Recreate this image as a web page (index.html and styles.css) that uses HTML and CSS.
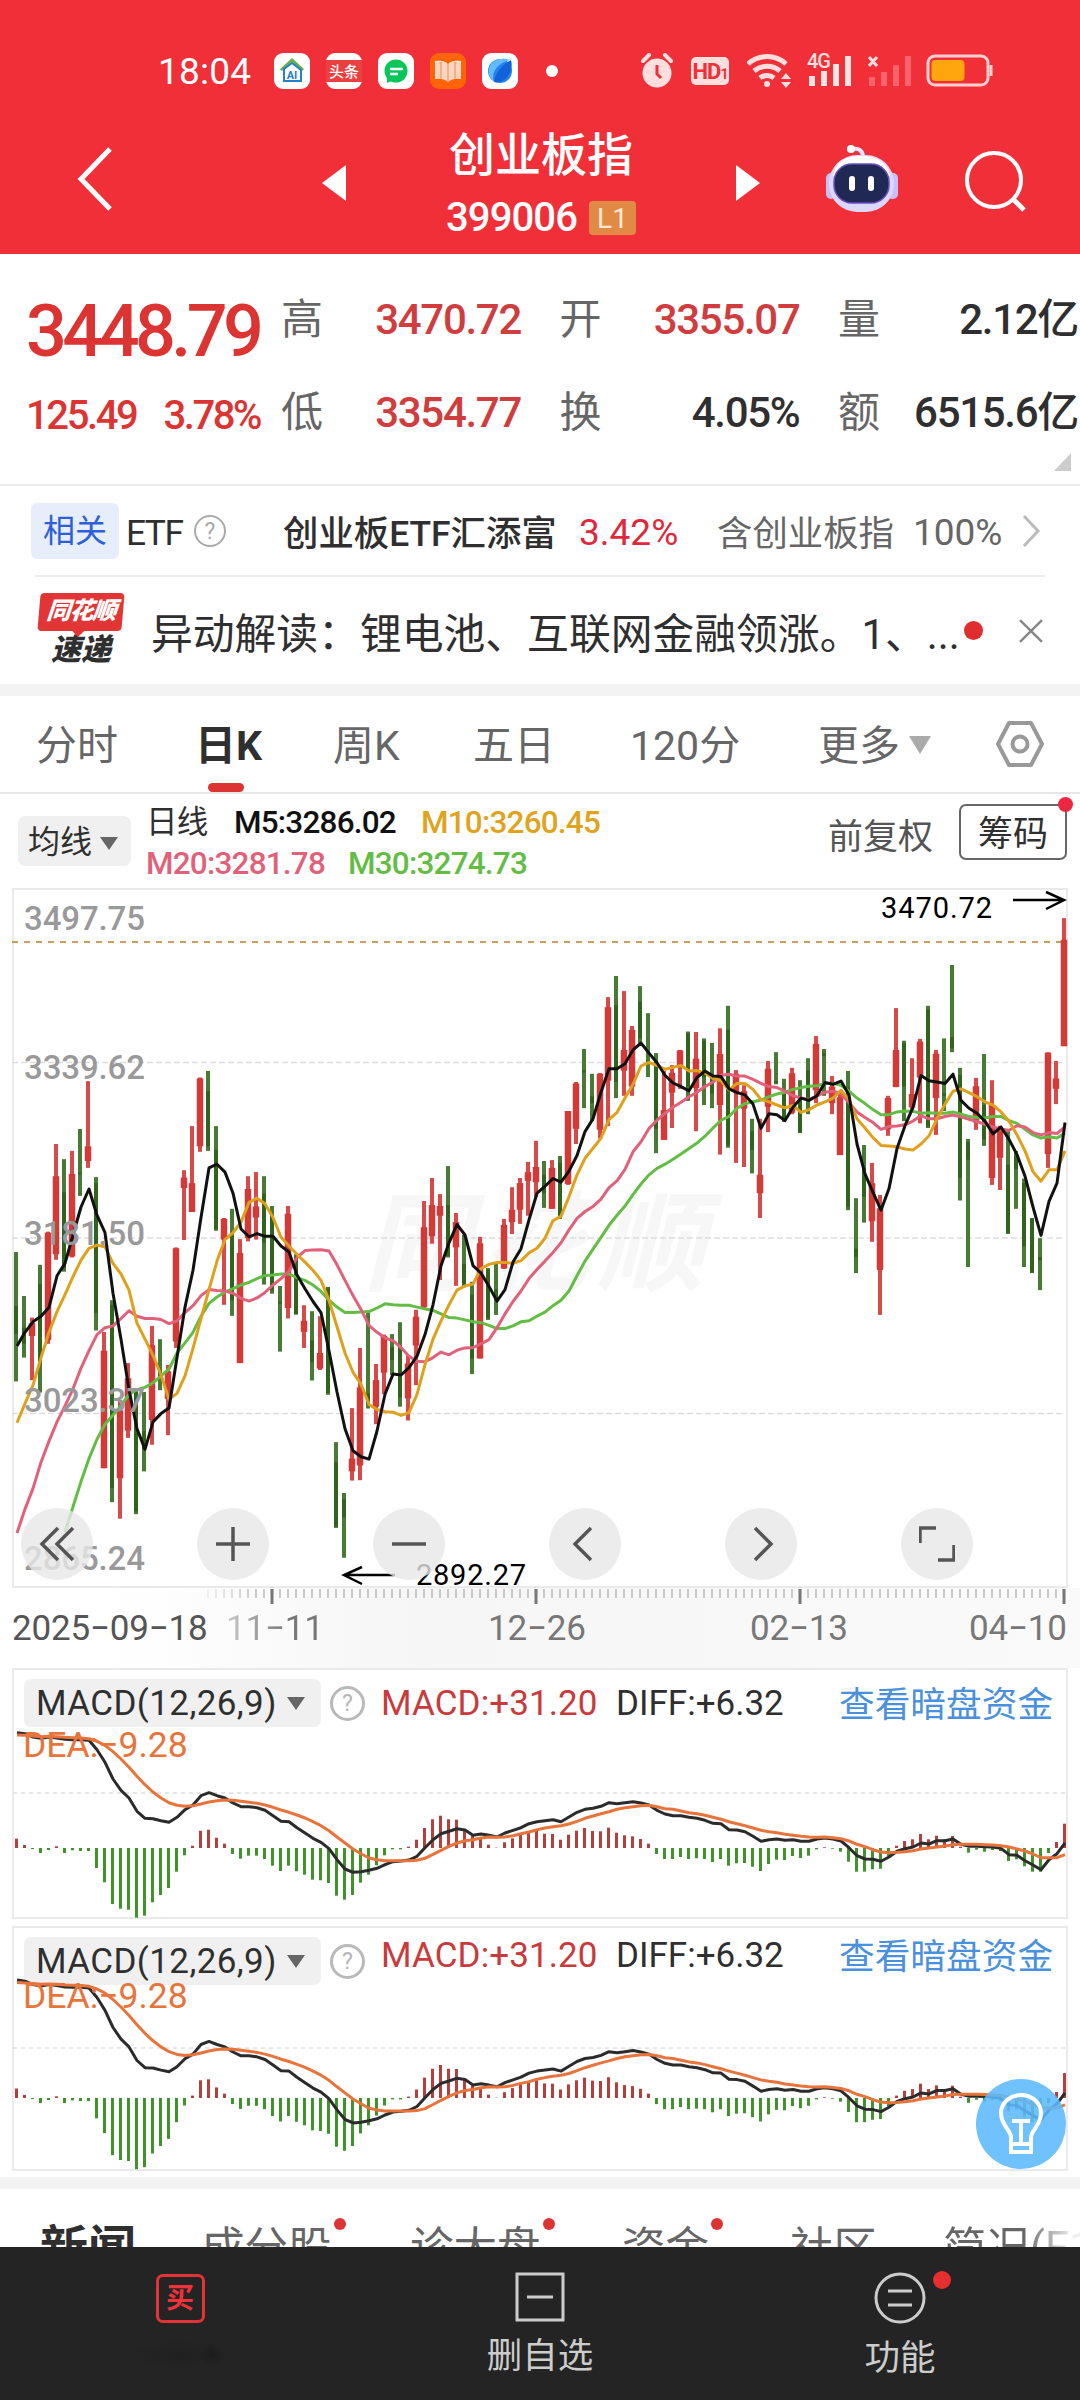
FILE: index.html
```html
<!DOCTYPE html>
<html lang="zh-CN">
<head>
    <meta charset="UTF-8">
    <meta name="viewport" content="width=device-width, initial-scale=1.0">
    <title>创业板指 399006</title>
    <link rel="stylesheet" href="styles.css">
</head>
<body>
    <header class="header">
        <div class="status-bar">
            <span class="time">18:04</span>
            <div class="apps">
                <svg class="app" viewBox="0 0 36 36"><rect width="36" height="36" rx="9" fill="#fff"/><path d="M7 17 18 7l11 10" fill="none" stroke="#6ab04a" stroke-width="3"/><path d="M10 16v12h17V17l-9-7z" fill="none" stroke="#2580c8" stroke-width="2"/><text x="18" y="26" class="app-ai">AI</text></svg>
                <svg class="app" viewBox="0 0 36 36"><rect width="36" height="36" rx="9" fill="#fff"/><rect y="7" width="36" height="22" fill="#ea4040"/><text x="18" y="24" class="app-toutiao">头条</text></svg>
                <svg class="app" viewBox="0 0 36 36"><rect width="36" height="36" rx="9" fill="#fff"/><circle cx="18" cy="18" r="11.5" fill="#08c65a"/><path d="M9 24v6l7-3z" fill="#08c65a"/><path d="M12 16h13M12 21h8" stroke="#fff" stroke-width="2.4"/></svg>
                <svg class="app" viewBox="0 0 36 36"><rect width="36" height="36" rx="9" fill="#ff6508"/><path d="M5 8q8-2 13 3 5-5 13-3v18q-8-1-13 3-5-4-13-3z" fill="#ffd6bd"/><path d="M18 11v18M11 9v17M25 9v17" stroke="#f2a47d" stroke-width="1.5"/></svg>
                <svg class="app" viewBox="0 0 36 36"><rect width="36" height="36" rx="9" fill="#fff"/><circle cx="18" cy="18" r="12" fill="#2384f0"/><path d="M29 7C19 8 8 17 12 29 6 24 4 15 11 9c6-5 14-3 18-2z" fill="#63baff"/><path d="M12 29C13 20 20 12 29 7c3 10-4 24-17 22z" fill="#1263d8"/></svg>
                <i class="more-dot"></i>
            </div>
            <div class="signals">
                <svg width="32" height="36" viewBox="0 0 32 36"><circle cx="16" cy="20" r="14.5" fill="#ffdede"/><path d="M2 8 8 2M30 8 24 2" stroke="#ffdede" stroke-width="4" stroke-linecap="round"/><path d="M16 12v9l4 4" fill="none" stroke="#f12f38" stroke-width="3"/></svg>
                <span class="hd">HD<small>1</small></span>
                <svg width="46" height="36" viewBox="0 0 46 36" fill="none" stroke="#ffdede" stroke-width="5"><path d="M1 11a28 28 0 0 1 38 0M7 18a20 20 0 0 1 26 0M13 25a11 11 0 0 1 14 0"/><circle cx="20" cy="31" r="3" fill="#ffdede" stroke="none"/><path d="M39 20l5 6H34zM39 35l5-6H34z" fill="#ffdede" stroke="none"/></svg>
                <svg width="47" height="36" viewBox="0 0 47 36"><text x="0" y="15" class="net">4G</text><path d="M5 33V23M17 33V18M29 33V11M41 33V3" stroke="#ffe3e3" stroke-width="6"/></svg>
                <svg width="44" height="36" viewBox="0 0 44 36"><path d="M1 4l8 9M9 4 1 13" stroke="#ffdede" stroke-width="3"/><path d="M4 33V24M16 33V19M28 33V12M40 33V3" stroke="#f9636b" stroke-width="6"/></svg>
                <svg width="67" height="34" viewBox="0 0 67 34"><rect x="2" y="2" width="60" height="29" rx="7" fill="none" stroke="#ffd0d0" stroke-width="3"/><rect x="5.5" y="6" width="33" height="21" rx="4" fill="#ffa50d"/><path d="M65 11v11" stroke="#ffd0d0" stroke-width="3"/></svg>
            </div>
        </div>
        <div class="title-bar">
            <svg class="back" width="36" height="64" viewBox="0 0 36 64"><path d="M33 2 4 32l29 30" fill="none" stroke="#fff" stroke-width="5"/></svg>
            <svg class="prev" width="24" height="36" viewBox="0 0 24 36"><path d="M24 0v36L0 18z" fill="#fff"/></svg>
            <div class="stock">
                <h1>创业板指</h1>
                <div class="code">399006 <span class="level">L1</span></div>
            </div>
            <svg class="next" width="24" height="36" viewBox="0 0 24 36"><path d="M0 0v36l24-18z" fill="#fff"/></svg>
            <svg class="robot" width="74" height="68" viewBox="0 0 74 68">
                <path d="M38 12c0-6-4-9-10-8" fill="none" stroke="#e9e4ff" stroke-width="4"/><circle cx="26" cy="4" r="4" fill="#fff"/>
                <rect x="1" y="28" width="10" height="26" rx="5" fill="#c8c0fa"/><rect x="62" y="28" width="11" height="26" rx="5" fill="#c8c0fa"/>
                <rect x="4" y="10" width="65" height="57" rx="28" fill="#dcd8fc"/><path d="M8 31c3-15 14-20 28-20s26 5 29 20z" fill="#fff"/>
                <rect x="9" y="19" width="55" height="39" rx="18" fill="#202954" stroke="#6a4cc0" stroke-width="1.5"/>
                <path d="M27 34v9M46 34v9" stroke="#fff" stroke-width="6" stroke-linecap="round"/>
            </svg>
            <svg class="search" width="62" height="62" viewBox="0 0 62 62" fill="none" stroke="#fff" stroke-width="4"><circle cx="29" cy="30" r="27"/><path d="M48 49l11 11" stroke-width="5"/></svg>
        </div>
    </header>

    <section class="quote">
        <div class="price">
            <div class="last">3448.79</div>
            <div class="change"><span>125.49</span><span>3.78%</span></div>
        </div>
        <div class="stat-col">
            <div class="stat"><label>高</label><b class="up">3470.72</b></div>
            <div class="stat"><label>低</label><b class="up">3354.77</b></div>
        </div>
        <div class="stat-col">
            <div class="stat"><label>开</label><b class="up">3355.07</b></div>
            <div class="stat"><label>换</label><b>4.05%</b></div>
        </div>
        <div class="stat-col">
            <div class="stat"><label>量</label><b>2.12亿</b></div>
            <div class="stat"><label>额</label><b>6515.6亿</b></div>
        </div>
        <i class="expand"></i>
    </section>

    <section class="related">
        <span class="tag">相关</span>
        <span class="etf">ETF</span>
        <span class="help">?</span>
        <span class="fund">创业板ETF汇添富</span>
        <span class="fund-up">3.42%</span>
        <span class="contain">含创业板指</span><span class="percent">100%</span>
        <svg width="19" height="34" viewBox="0 0 19 34"><path d="M2 2l14 15L2 32" fill="none" stroke="#bbb" stroke-width="3"/></svg>
    </section>

    <section class="news">
        <div class="news-logo"><span class="logo-top">同花顺</span><span class="logo-bottom">速递</span></div>
        <p>异动解读：锂电池、互联网金融领涨。1、...</p>
        <i class="news-dot"></i>
        <svg width="24" height="24" viewBox="0 0 24 24"><path d="M1 1l22 22M23 1 1 23" stroke="#888" stroke-width="2.5"/></svg>
    </section>

    <nav class="periods">
        <a class="p1">分时</a>
        <a class="p2 active">日K</a>
        <a class="p3">周K</a>
        <a class="p4">五日</a>
        <a class="p5">120分</a>
        <a class="p6">更多<i class="tri light"></i></a>
        <svg width="50" height="48" viewBox="0 0 50 48" fill="none" stroke="#999" stroke-width="4"><path d="M14 3h22l11 21-11 21H14L3 24z" stroke-linejoin="round"/><circle cx="25" cy="24" r="7.5"/></svg>
    </nav>

    <section class="legend">
        <span class="picker">均线<i class="tri"></i></span>
        <div class="averages">
            <div><span class="kind">日线</span><span class="m5">M5:3286.02</span><span class="m10">M10:3260.45</span></div>
            <div><span class="m20">M20:3281.78</span><span class="m30">M30:3274.73</span></div>
        </div>
        <span class="adjust">前复权</span>
        <span class="chips">筹码</span>
    </section>

    <section class="kline">
        <svg id="kline" width="1080" height="700" viewBox="0 0 1080 700"></svg>
        <div class="tools">
            <button><svg viewBox="0 0 36 36"><path d="M19 2 3 18l16 16M34 2 18 18l16 16"/></svg></button>
            <button><svg viewBox="0 0 36 36"><path d="M1 18h34M18 1v34"/></svg></button>
            <button><svg viewBox="0 0 36 36"><path d="M1 18h34"/></svg></button>
            <button><svg viewBox="0 0 36 36"><path d="M24 2 8 18l16 16"/></svg></button>
            <button><svg viewBox="0 0 36 36"><path d="M12 2l16 16-16 16"/></svg></button>
            <button><svg viewBox="0 0 36 36"><path d="M1 17V2h16M35 19v15H19"/></svg></button>
        </div>
    </section>

    <section class="axis">
        <svg id="ticks" width="1080" height="18" viewBox="0 0 1080 18"></svg>
        <div class="dates">
            <span class="start">2025−09−18</span>
            <span class="d1">11−11</span>
            <span class="d2">12−26</span>
            <span class="d3">02−13</span>
            <span class="d4">04−10</span>
        </div>
    </section>

    <section class="macd first">
        <svg class="macd-plot" data-zero="180" data-grid="125" data-scale="1"></svg>
        <div class="macd-head">
            <span class="macd-name">MACD(12,26,9)<i class="tri"></i></span>
            <span class="help">?</span>
            <span class="macd-value">MACD:+31.20</span>
            <span class="diff-value">DIFF:+6.32</span>
            <a>查看暗盘资金</a>
        </div>
        <div class="dea-value">DEA:−9.28</div>
    </section>
    <section class="macd second">
        <svg class="macd-plot" data-zero="172" data-grid="122" data-scale="1.022"></svg>
        <div class="macd-head">
            <span class="macd-name">MACD(12,26,9)<i class="tri"></i></span>
            <span class="help">?</span>
            <span class="macd-value">MACD:+31.20</span>
            <span class="diff-value">DIFF:+6.32</span>
            <a>查看暗盘资金</a>
        </div>
        <div class="dea-value">DEA:−9.28</div>
        <div class="bulb">
            <svg width="46" height="62" viewBox="0 0 46 62" fill="none" stroke="#fff" stroke-width="4"><path d="M13 44C12 36 3 32 3 20a20 18 0 0 1 40 0c0 12-9 16-10 24v15H13zM13 51h20M23 50V28M14 28h18"/></svg>
        </div>
    </section>

    <nav class="info-tabs">
        <a class="t1">新闻</a>
        <a class="t2 dot">成分股</a>
        <a class="t3 dot">诊大盘</a>
        <a class="t4 dot">资金</a>
        <a class="t5">社区</a>
        <a class="t6">简况(F10)</a>
    </nav>

    <footer class="bottom-bar">
        <a class="buy"><span class="buy-icon">买</span><i class="smudge"></i></a>
        <a><svg width="50" height="50" viewBox="0 0 50 50" fill="none" stroke="#ccc" stroke-width="3"><rect x="2" y="2" width="46" height="46"/><path d="M12 25h26"/></svg>删自选</a>
        <a class="func"><svg width="52" height="52" viewBox="0 0 52 52" fill="none" stroke="#ccc" stroke-width="3"><circle cx="26" cy="26" r="24"/><path d="M14 19h24M14 33h24"/></svg>功能</a>
    </footer>

    <script src="chart.js"></script>
</body>
</html>
```
FILE: styles.css
```css
body {
    margin: 0;
    width: 1080px;
    height: 2400px;
    overflow: hidden;
    background: #fff;
    color: #2f2f2f;
    font-family: Roboto, "Noto Sans CJK SC", sans-serif;
}
a, span, p, label, b {
    white-space: nowrap;
}
.header {
    height: 254px;
    background: #f12f38;
    color: #fff;
}
.status-bar {
    display: flex;
    align-items: center;
    height: 36px;
    padding: 53px 87px 0 158px;
}
.time {
    width: 116px;
    font-size: 37px;
    letter-spacing: 0.2px;
}
.apps {
    display: flex;
    align-items: center;
    gap: 16px;
}
.app {
    width: 36px;
    height: 36px;
}
.app-ai {
    font-size: 11px;
    font-weight: 700;
    fill: #2580c8;
    text-anchor: middle;
}
.app-toutiao {
    font-size: 15px;
    font-weight: 500;
    fill: #fff;
    text-anchor: middle;
}
.more-dot {
    width: 12px;
    height: 12px;
    margin-left: 12px;
    border-radius: 50%;
    background: #fff;
}
.signals {
    display: flex;
    align-items: center;
    gap: 14px;
    margin-left: auto;
}
.hd {
    width: 38px;
    height: 28px;
    margin: 0 4px;
    border-radius: 5px;
    background: #ffdede;
    color: #f12f38;
    font-size: 22px;
    font-weight: 700;
    line-height: 29px;
    letter-spacing: -1px;
    text-align: center;
}
.hd small {
    font-size: 14px;
}
.net {
    font-size: 20px;
    font-weight: 500;
    fill: #ffdede;
    letter-spacing: -1px;
}
.title-bar {
    display: flex;
    align-items: center;
    height: 165px;
    padding: 0 53px 0 77px;
}
.prev {
    margin: 22px 0 0 209px;
}
.stock {
    width: 390px;
    margin-top: 28px;
    text-align: center;
}
.stock h1 {
    margin: 0 0 -2px;
    font-size: 46px;
    font-weight: 500;
    line-height: 66px;
}
.code {
    display: flex;
    justify-content: center;
    align-items: center;
    gap: 12px;
    font-size: 40px;
    font-weight: 500;
    line-height: 64px;
    letter-spacing: -0.9px;
}
.level {
    width: 47px;
    height: 34px;
    border-radius: 4px;
    background: #e08a45;
    color: #ffe9d4;
    font-size: 28px;
    font-weight: 400;
    line-height: 35px;
    letter-spacing: 0;
}
.back {
    margin-top: 15px;
}
.next {
    margin-top: 22px;
}
.robot {
    margin: 15px 0 0 65px;
}
.search {
    margin: 18px 0 0 auto;
}
.quote {
    position: relative;
    display: flex;
    height: 230px;
    border-bottom: 2px solid #ececec;
}
.price {
    width: 255px;
    padding: 36px 0 0 26px;
    color: #dc3433;
}
.last {
    font-size: 72px;
    font-weight: 500;
    line-height: 84px;
    letter-spacing: -4.6px;
}
.change {
    display: flex;
    gap: 27px;
    padding-top: 20px;
    font-size: 40px;
    font-weight: 500;
    line-height: 44px;
    letter-spacing: -2.4px;
}
.stat-col {
    width: 240px;
    margin-right: 38.5px;
    padding-top: 36px;
}
.stat-col:nth-child(4) {
    margin-right: 0;
}
.stat {
    display: flex;
    justify-content: space-between;
    height: 60px;
    margin-bottom: 33px;
    font-size: 42px;
    line-height: 60px;
}
.stat label {
    color: #666;
}
.stat b {
    font-weight: 500;
    letter-spacing: -1.3px;
}
.stat .up {
    color: #cf3d3e;
}
.expand {
    position: absolute;
    right: 9px;
    bottom: 13px;
    border-left: 17px solid transparent;
    border-bottom: 18px solid #ccc;
}
.related {
    display: flex;
    align-items: center;
    height: 89px;
    margin: 0 35px;
    border-bottom: 2px solid #ececec;
    font-size: 35.4px;
}
.tag {
    width: 88px;
    height: 56px;
    margin-left: -4px;
    border-radius: 6px;
    background: #e6edfb;
    color: #2f5fd8;
    font-size: 32px;
    line-height: 56px;
    text-align: center;
}
.etf {
    width: 68px;
    margin: 4px 0 0 7px;
    letter-spacing: -1.6px;
}
.help {
    box-sizing: border-box;
    width: 32px;
    height: 32px;
    border: 2px solid #aaa;
    border-radius: 50%;
    color: #aaa;
    font-size: 23px;
    line-height: 29px;
    text-align: center;
}
.fund {
    margin-left: 57px;
    width: 296px;
    font-weight: 500;
}
.fund-up {
    width: 138px;
    padding-top: 3px;
    color: #e0283c;
    font-size: 37px;
}
.contain {
    color: #666;
}
.percent {
    margin-left: 19px;
    padding-top: 3px;
    width: 109px;
    color: #666;
    font-size: 37px;
}
.news {
    display: flex;
    align-items: center;
    height: 107px;
    padding: 0 37px;
    border-bottom: 12px solid #f3f3f3;
}
.news-logo {
    display: flex;
    flex-direction: column;
    align-items: center;
    width: 88px;
    font-style: italic;
    font-weight: 900;
}
.logo-top {
    position: relative;
    width: 84px;
    height: 38px;
    border-radius: 4px;
    background: #e23535;
    color: #fff;
    font-size: 24px;
    line-height: 37px;
    letter-spacing: -1px;
    text-align: center;
    transform: skewX(-5deg);
}
.logo-top::after {
    content: "";
    position: absolute;
    left: 34px;
    top: 37px;
    border: 7px solid transparent;
    border-top-color: #e23535;
    border-bottom: 0;
}
.logo-bottom {
    font-size: 30px;
    line-height: 37px;
}
.news p {
    width: 814px;
    margin: 0 0 0 26px;
    font-size: 41.8px;
}
.news-dot {
    width: 19px;
    height: 19px;
    border-radius: 50%;
    background: #e02d2d;
}
.news svg {
    margin-left: 36px;
}
.periods {
    display: flex;
    align-items: center;
    height: 96px;
    padding-left: 36px;
    border-bottom: 2px solid #e7e7e7;
    color: #666;
    font-size: 41px;
}
.periods a {
    position: relative;
    height: 96px;
    line-height: 100px;
}
.p1 { width: 159px; }
.p2 { width: 138px; }
.p3 { width: 140px; }
.p4 { width: 157px; }
.p5 { width: 188px; }
.p6 { width: 177px; }
.periods .active {
    color: #2f2f2f;
    font-weight: 700;
}
.active::after {
    content: "";
    position: absolute;
    left: 13px;
    bottom: 0;
    width: 36px;
    height: 9px;
    border-radius: 5px;
    background: #dc3433;
}
.tri {
    display: inline-block;
    border: 9.5px solid transparent;
    border-top: 13px solid #666;
    border-bottom: 0;
    vertical-align: middle;
}
.tri.light {
    margin: -8px 0 0 9px;
    border-width: 18px 11px 0;
    border-top-color: #aaa;
}
.legend {
    display: flex;
    align-items: center;
    height: 94px;
    padding-left: 18px;
}
.picker {
    width: 103px;
    height: 50px;
    padding-left: 10px;
    border-radius: 7px;
    background: #f0f0f0;
    font-size: 32px;
    line-height: 52px;
}
.picker .tri {
    margin: -2px 0 0 8px;
}
.averages {
    width: 682px;
    margin: 4px 0 0 15px;
    font-size: 31.5px;
    font-weight: 500;
    line-height: 41px;
    letter-spacing: -0.8px;
}
.averages div {
    display: flex;
}
.kind {
    width: 88px;
    font-weight: 400;
}
.m5 { width: 187px; color: #111; }
.m10 { color: #dfa31e; }
.m20 { width: 202px; color: #e2617a; }
.m30 { color: #63bd45; }
.adjust {
    width: 131px;
    margin-top: -16px;
    font-size: 35px;
    color: #555;
}
.chips {
    position: relative;
    box-sizing: border-box;
    width: 108px;
    height: 56px;
    margin-top: -18px;
    border: 2px solid #666;
    border-radius: 7px;
    font-size: 35px;
    line-height: 58px;
    text-align: center;
}
.chips::after {
    content: "";
    position: absolute;
    top: -9px;
    right: -8px;
    width: 15px;
    height: 15px;
    border-radius: 50%;
    background: #ee2740;
}
.kline {
    position: relative;
    height: 700px;
}
.kline svg {
    display: block;
}
.scale {
    font-size: 33px;
    font-weight: 500;
    fill: #999;
}
.extreme {
    font-size: 29px;
    fill: #000;
}
.watermark {
    font-size: 108px;
    font-weight: 700;
    font-style: italic;
    fill: #f7f7f7;
}
.tools {
    position: absolute;
    left: 21px;
    bottom: 8px;
    display: flex;
    gap: 104px;
}
.tools button {
    width: 72px;
    height: 72px;
    padding: 18px;
    border: 0;
    border-radius: 50%;
    background: rgba(231, 231, 231, 0.8);
}
.tools svg {
    width: 36px;
    height: 36px;
    fill: none;
    stroke: #555;
    stroke-width: 3.5;
}
.axis {
    height: 80px;
    background: linear-gradient(90deg, #fff 0, #fff 110px, #f6f6f6 420px, #fafafa);
}
.axis svg {
    display: block;
}
.dates {
    display: flex;
    padding: 2px 0 0 12px;
    color: #777;
    font-size: 35px;
    line-height: 42px;
    letter-spacing: -0.2px;
}
.start {
    width: 214px;
    color: #555;
}
.d1 {
    width: 262px;
    background: linear-gradient(90deg, #ccc, #777 60px);
    background-clip: text;
    color: transparent;
}
.d2 { width: 262px; }
.d3 { width: 219px; }
.macd {
    position: relative;
    box-sizing: border-box;
    width: 1056px;
    margin-left: 12px;
    border: 2px solid #eaeaea;
    background: #fff;
}
.first {
    height: 251px;
    margin-bottom: 7px;
}
.second {
    height: 245px;
    margin-bottom: 6px;
}
.macd-plot {
    position: absolute;
    left: -14px;
    top: -2px;
    width: 1080px;
    height: 251px;
}
.macd-head {
    display: flex;
    align-items: center;
    height: 48px;
    padding: 9px 0 0 10px;
    font-size: 35px;
}
.macd-name {
    width: 285px;
    height: 48px;
    padding-left: 12px;
    border-radius: 7px;
    background: #f0f0f0;
    line-height: 50px;
    letter-spacing: 0.4px;
}
.macd-name .tri {
    margin: -5px 0 0 10px;
}
.macd .help {
    width: 35px;
    height: 35px;
    margin-left: 9px;
    border-width: 3px;
    color: #b5b5b5;
    border-color: #b9b9b9;
    line-height: 30px;
}
.macd-value {
    width: 235px;
    margin-left: 16px;
    color: #c93a3c;
    letter-spacing: 0.1px;
}
.diff-value {
    width: 223px;
}
.macd a {
    margin-top: -4px;
    color: #4a90dc;
    font-size: 35.7px;
}
.second .macd-value, .second .diff-value {
    margin-top: -11px;
}
.second a {
    margin-top: -16px;
}
.dea-value {
    position: relative;
    margin: -2px 0 0 9px;
    color: #e8743b;
    font-size: 35.5px;
    line-height: 40px;
}
.second .dea-value {
    margin-top: -9px;
}
.bulb {
    position: absolute;
    right: 0;
    bottom: 0;
    display: flex;
    align-items: center;
    justify-content: center;
    width: 90px;
    height: 90px;
    border-radius: 50%;
    background: rgba(91, 186, 253, 0.88);
}
.info-tabs {
    display: flex;
    height: 58px;
    padding: 0 0 0 40px;
    border-top: 12px solid #f3f3f3;
    overflow: hidden;
    color: #666;
    font-size: 43.5px;
    line-height: 120px;
}
.t1 {
    width: 161px;
    color: #2f2f2f;
    font-size: 48px;
    font-weight: 700;
}
.t2 { width: 209px; }
.t3 { width: 212px; }
.t4 { width: 168px; }
.t5 { width: 153px; }
.t6 {
    width: 137px;
    overflow: hidden;
    background: linear-gradient(90deg, #666 80px, #eee 130px);
    background-clip: text;
    color: transparent;
}
.dot {
    position: relative;
}
.dot::after {
    content: "";
    position: absolute;
    top: 29px;
    width: 12px;
    height: 12px;
    margin-left: 2px;
    border-radius: 50%;
    background: #dc3433;
}
.bottom-bar {
    display: flex;
    height: 153px;
    background: #242424;
}
.bottom-bar a {
    position: relative;
    display: flex;
    flex: 1;
    flex-direction: column;
    align-items: center;
    padding-top: 25px;
    color: #ccc;
    font-size: 35.5px;
    line-height: 68px;
}
.bottom-bar .buy {
    padding-top: 27px;
}
.buy-icon {
    box-sizing: border-box;
    width: 49px;
    height: 49px;
    border: 3px solid #e23438;
    border-radius: 7px;
    color: #f0323a;
    font-size: 28px;
    font-weight: 700;
    line-height: 44px;
    text-align: center;
}
.smudge {
    width: 100px;
    height: 30px;
    margin-top: 17px;
    background: radial-gradient(circle at 82% 50%, #1c1c1c 0, transparent 12px), radial-gradient(ellipse, #202020, transparent 70%);
}
.func::after {
    content: "";
    position: absolute;
    left: 213px;
    top: 24px;
    width: 18px;
    height: 18px;
    border-radius: 50%;
    background: #e6302f;
}
```
FILE: chart.js
```js
const STEP = 8;
const LEFT = 16;
const x = i => LEFT + i * STEP;
const y = v => (v * 0.4592 - 8).toFixed(1);

// direction, high, body top, body bottom, low
const candles = `
G 810 928 988 1092|G 906 975 1010 1040|R 953 965 993 1089|G 838 880 1048 1116|R 766 768 1002 1010|R 575 645 815 827
G 608 680 845 853|R 590 640 820 822|G 542 637 641 688|R 438 580 612 627|G 647 660 943 981|R 984 1025 1281 1281
G 915 925 1324 1355|R 1135 1155 1303 1391|R 1052 1085 1199 1215|G 1110 1115 1375 1381|G 1115 1200 1240 1288|R 971 1013 1176 1230
G 1000 1070 1085 1111|R 1056 1070 1130 1209|R 800 802 1005 1019|R 632 648 671 784|R 536 660 723 723|R 430 432 580 592
G 416 460 580 590|G 536 588 760 764|R 736 738 783 925|G 716 775 915 949|R 782 812 1052 1052|R 645 673 780 787
R 636 711 735 783|G 645 683 790 881|G 710 730 894 901|G 884 918 923 1027|R 710 727 932 955|G 815 820 946 946
R 926 960 984 1019|G 939 1003 1050 1090|R 950 1030 1064 1067|G 886 890 1117 1121|G 1224 1268 1408 1411|G 1335 1348 1388 1476
R 1150 1260 1288 1308|R 1019 1105 1275 1307|G 942 1118 1140 1151|R 1054 1089 1147 1185|R 990 993 1073 1120|G 989 1017 1045 1078
G 963 1020 1127 1147|R 1035 1053 1129 1177|R 936 951 1014 1100|R 699 756 930 932|R 649 708 776 792|R 684 710 731 871
G 623 708 819 822|R 725 745 800 884|G 773 836 881 887|G 875 903 1042 1076|R 777 791 1042 1042|G 845 848 955 958
G 836 892 914 947|R 738 751 846 847|R 669 718 745 771|R 649 660 718 749|R 614 636 655 731|R 568 625 658 690
G 612 642 682 714|R 610 627 716 716|G 601 616 733 738|R 503 503 662 664|R 440 443 542 575|G 368 415 419 497
G 422 471 486 525|R 420 422 544 563|R 255 277 437 536|G 209 273 440 475|R 242 370 415 470|R 318 326 450 470
G 231 265 345 356|G 290 393 399 429|G 377 392 542 595|R 415 501 566 566|R 403 420 463 540|R 370 371 406 455
G 330 334 450 481|R 331 389 453 547|G 345 350 430 490|G 355 430 465 497|R 323 379 490 598|G 274 326 578 583
R 414 422 462 616|R 447 460 498 625|G 520 547 588 639|R 520 642 682 736|R 394 411 494 549|G 375 438 442 445
G 433 465 525 527|R 409 421 507 510|G 436 475 550 551|G 388 415 475 510|R 340 357 458 486|G 368 377 383 470
R 427 450 486 510|R 460 473 599 599|G 416 452 712 719|G 693 803 821 856|G 577 627 690 746|R 616 660 743 788
R 686 715 849 947|R 470 475 543 557|R 279 370 451 451|G 350 355 450 525|R 388 466 495 500|R 346 352 430 530
G 274 283 537 540|R 370 378 475 555|G 345 464 470 503|G 185 342 366 375|G 409 425 648 698|G 564 571 609 843
R 431 449 528 544|G 379 490 565 579|R 436 490 649 664|R 535 545 605 675|G 547 620 768 771|G 590 600 630 716
G 650 660 798 843|G 736 738 855 856|G 780 821 828 893|R 375 376 597 627|R 394 432 455 488|R 83 130 362 362
`.trim().split(/[|\n]/).map(s => s.split(' '));

const averages = [
    ['#63bd45', 6, [1420,1365,1310,1260,1218,1185,1165,1145,1120,1110,1105,1095,1080,1065,1030,1008,985,950,922,908,897,890,882,876,868,861,860,858,858,866,872,882,896,915,930,942,942,941,940,932,923,925,926,926,930,934,937,945,953,954,958,962,964,970,977,977,971,962,960,950,941,927,915,895,862,830,804,778,752,730,710,685,662,642,628,619,608,597,585,573,558,540,523,515,497,487,483,479,472,466,462,456,452,449,448,443,443,447,460,475,487,500,511,511,505,503,504,508,507,508,508,505,510,515,517,518,515,515,524,530,543,555,562,559,562,551]],
    ['#e2617a', 0, [1422,1370,1325,1268,1222,1180,1145,1108,1063,1025,990,975,971,955,938,950,955,955,957,966,960,942,927,905,892,894,895,900,911,917,910,898,882,868,852,822,807,806,805,808,838,872,905,935,970,985,997,1003,1018,1037,1048,1049,1040,1028,1034,1024,1019,1018,1010,1001,975,945,918,895,868,848,830,811,790,762,737,722,711,695,670,655,630,592,570,541,523,508,495,484,472,462,450,440,425,423,427,427,434,443,450,452,460,470,475,478,470,462,460,465,485,505,517,528,543,537,536,533,525,513,520,520,515,512,516,521,526,532,538,543,545,535,538,550,555,550,552,538]],
    ['#dfa01b', 0, [1182,1140,1100,1040,985,940,903,864,828,802,795,799,835,858,893,965,1000,1035,1078,1131,1118,1080,1020,955,892,830,783,768,745,702,693,705,735,778,797,815,832,850,872,915,973,1030,1072,1098,1142,1153,1158,1159,1166,1160,1120,1055,1000,960,925,893,884,880,846,837,833,833,835,829,812,802,780,742,732,690,642,606,584,562,522,506,475,445,405,397,404,412,408,404,416,415,420,432,437,457,443,443,456,478,483,490,496,491,506,500,490,483,475,458,478,520,540,561,578,579,581,586,588,575,557,520,488,460,455,463,472,483,490,505,525,555,590,635,656,631,631,590]],
    ['#111', 0, [1015,985,962,950,931,862,835,773,712,673,730,768,900,1000,1110,1195,1240,1180,1162,1150,1040,930,850,735,627,619,636,682,760,777,770,776,776,797,810,860,890,918,942,1025,1115,1195,1243,1256,1261,1200,1120,1076,1078,1062,1037,990,925,840,790,750,773,840,856,885,917,892,832,803,740,682,667,650,658,634,600,548,520,462,411,411,400,370,355,377,398,425,442,450,459,430,416,427,428,455,463,468,488,541,509,511,524,495,475,480,470,441,445,438,468,575,640,680,719,672,585,535,495,426,437,440,443,423,480,497,508,525,553,538,565,598,645,712,774,700,660,528]]
];

const macd = [28,9,-3,-15,-6,5,-15,-7,-9,-9,-60,-103,-168,-182,-185,-209,-203,-163,-141,-120,-71,-22,7,52,55,31,13,-18,-32,-23,-23,-33,-53,-69,-53,-70,-80,-95,-97,-105,-143,-155,-141,-104,-80,-52,-22,-4,-4,4,25,60,86,97,86,85,57,38,30,10,1,17,29,45,50,53,43,42,25,40,52,60,51,50,61,46,38,35,27,13,-18,-33,-33,-27,-33,-31,-33,-42,-33,-53,-46,-45,-56,-69,-48,-35,-36,-24,-30,-23,-4,2,-2,-11,-41,-71,-71,-64,-62,-25,7,21,26,42,26,37,26,36,4,-14,-5,-11,-6,-9,-39,-34,-55,-71,-71,-15,18,73];
const diff = [249,252,262,266,262,265,269,270,270,272,300,338,388,422,445,485,506,507,513,518,503,480,466,438,429,438,445,460,471,471,474,482,498,515,516,534,550,566,578,597,630,658,668,666,662,656,645,636,634,631,620,594,570,552,545,537,541,557,553,557,562,550,542,534,522,516,513,510,516,502,488,479,476,470,459,462,459,456,460,466,482,493,498,498,503,506,512,521,522,540,541,546,560,575,570,568,572,570,575,575,568,565,568,574,594,618,628,629,635,622,605,597,592,580,583,573,573,568,584,590,590,591,592,596,615,617,633,646,660,630,612,580];
const dea = [256,257,259,261,260,261,263,264,265,267,275,287,306,328,353,380,405,427,445,459,467,470,468,463,457,453,451,452,455,458,461,466,473,481,488,496,505,516,528,543,562,580,598,612,625,630,633,633,633,633,632,626,614,602,590,580,573,570,565,562,563,562,558,552,547,540,535,531,528,523,515,506,499,492,486,479,474,471,468,467,471,477,479,484,489,492,497,503,509,516,522,528,535,542,546,549,554,557,560,562,563,562,564,567,574,584,591,600,607,609,608,606,603,598,595,592,589,585,584,584,584,585,586,588,592,598,604,613,624,624,624,615];

function line(points, color) {
    return `<polyline points="${points.join(' ')}" fill="none" stroke="${color}" stroke-width="3" stroke-linejoin="round"/>`;
}

function drawKline() {
    let s = '<rect x="13" y="1" width="1054" height="698" fill="none" stroke="#eaeaea" stroke-width="2"/>';
    s += '<text x="363" y="394" class="watermark" textLength="342">同花顺</text>';
    [174.5, 350, 525.5].forEach(g => {
        s += `<path d="M12 ${g}H1065" stroke="#ddd" stroke-width="1.5" stroke-dasharray="6 3"/>`;
    });
    s += '<path d="M12 54H1065" stroke="#c3a263" stroke-width="2" stroke-dasharray="6 6"/>';
    candles.forEach(([dir, high, top, bottom, low], i) => {
        const red = dir === 'R';
        s += `<path d="M${x(i)} ${y(high)}V${y(low)}" stroke="${red ? '#d8494a' : '#477a35'}" stroke-width="4"/>`;
        s += `<path d="M${x(i)} ${y(top)}V${y(bottom)}" stroke="${red ? '#d23a38' : '#30641c'}" stroke-width="${red ? 6.5 : 4}"/>`;
    });
    averages.forEach(([color, start, values]) => {
        s += line(values.map((v, i) => `${x(i + start) + 1},${y(v)}`), color);
    });
    [['3497.75', 42], ['3339.62', 191], ['3181.50', 357], ['3023.37', 524], ['2865.24', 682]].forEach(([t, ty]) => {
        s += `<text x="24" y="${ty}" class="scale" textLength="121">${t}</text>`;
    });
    s += '<text x="881" y="30" class="extreme" textLength="111">3470.72</text>';
    s += '<path d="M1013 12h50M1046 4l18 8-18 9" fill="none" stroke="#000" stroke-width="2.5"/>';
    s += '<text x="416" y="697" class="extreme" textLength="110">2892.27</text>';
    s += '<path d="M395 687h-50M362 679l-18 8 18 9" fill="none" stroke="#000" stroke-width="2.5"/>';
    document.getElementById('kline').innerHTML = s;
}

function drawTicks() {
    let s = '';
    for (let i = 24; i < 132; i++) {
        const major = i % 33 === 32;
        s += `<path d="M${x(i)} 1v${major ? 15 : 9}" stroke="${major ? '#777' : '#999'}" stroke-width="${major ? 3 : 1}" opacity="${Math.min(1, (i - 22) / 8)}"/>`;
    }
    document.getElementById('ticks').innerHTML = s;
}

function drawMacd(svg) {
    const zero = +svg.dataset.zero;
    const k = +svg.dataset.scale / 3;
    let s = `<path d="M13 ${svg.dataset.grid}H1066" stroke="#ddd" stroke-width="1.5" stroke-dasharray="4 4"/>`;
    macd.forEach((v, i) => {
        s += `<path d="M${x(i) + 0.5} ${zero}v${(-v * k).toFixed(1)}" stroke="${v > 0 ? '#b53f3d' : '#3f932b'}" stroke-width="3"/>`;
    });
    const points = values => values.map((v, i) => `${x(i) + 1},${(zero + (v - 595) * k).toFixed(1)}`);
    s += line(points(diff), '#2b2b2b');
    s += line(points(dea), '#e8743b');
    svg.innerHTML = s;
}

drawKline();
drawTicks();
document.querySelectorAll('.macd-plot').forEach(drawMacd);
```
